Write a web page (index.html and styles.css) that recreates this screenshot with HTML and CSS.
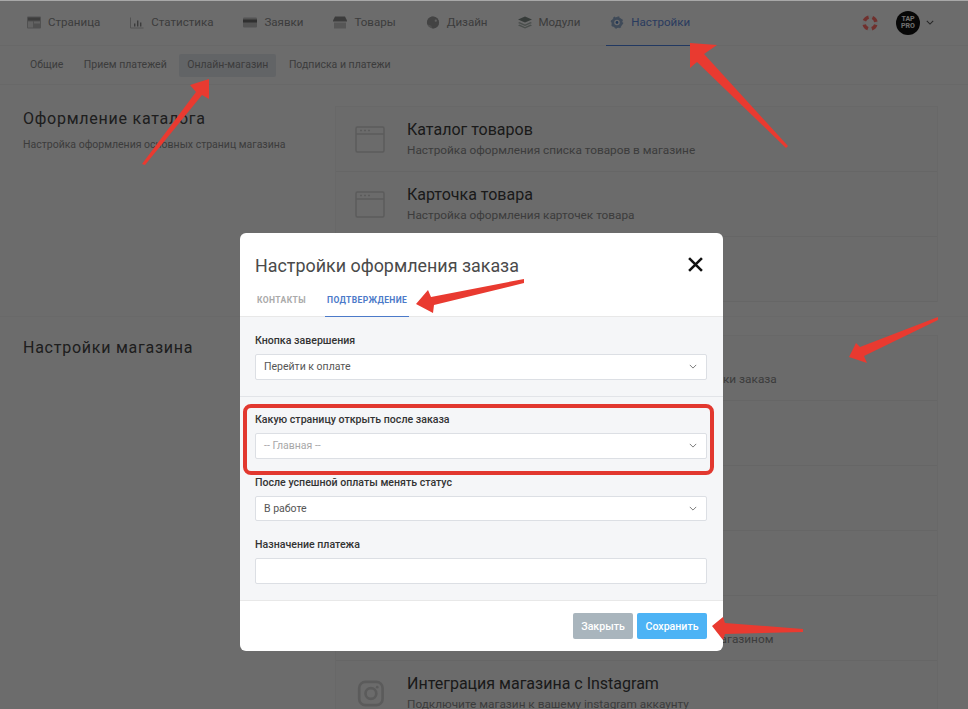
FILE: index.html
```html
<!DOCTYPE html>
<html lang="ru">
<head>
    <meta charset="UTF-8">
    <title>Настройки</title>
    <link rel="stylesheet" href="styles.css">
</head>
<body>
    <div class="page">
        <nav class="topnav">
            <a class="nav-item">
                <svg class="nav-icon" viewBox="0 0 14 12"><rect width="14" height="12" rx="1" fill="#b9b9b9"/><rect x="1" y="1" width="12" height="3" fill="#8c8c8c"/><rect x="1" y="5" width="5" height="6" fill="#e2e2e2"/><rect x="7" y="5" width="6" height="2" fill="#e2e2e2"/></svg>
                Страница
            </a>
            <a class="nav-item">
                <svg class="nav-icon" viewBox="0 0 14 12"><path d="M.5 1v10.5h13" fill="none" stroke="#bbb"/><path d="M4 7h1.4v3H4zM7 4h1.4v6H7zM10 6h1.4v4H10z" fill="#888"/></svg>
                Статистика
            </a>
            <a class="nav-item">
                <svg class="nav-icon" viewBox="0 0 14 12"><rect y="1" width="14" height="10" rx="1" fill="#bdbdbd"/><rect y="3" width="14" height="3" fill="#6f6f6f"/></svg>
                Заявки
            </a>
            <a class="nav-item">
                <svg class="nav-icon" viewBox="0 0 14 12"><path d="M2 0h10l2 4v1H0V4z" fill="#8a8a8a"/><path d="M1 6h12v6H1z" fill="#c4c4c4"/></svg>
                Товары
            </a>
            <a class="nav-item">
                <svg class="nav-icon" viewBox="0 0 14 14"><circle cx="7" cy="7" r="6.5" fill="#b5b5b5"/><path d="M7 .5a6.500 6.500 0 0 1 0 13c-1.500 0-1-2-2-3s-4 0-4.500-3C.5 3 3.500.5 7 .5z" fill="#999"/><circle cx="10" cy="5" r="1.200" fill="#ddd"/></svg>
                Дизайн
            </a>
            <a class="nav-item">
                <svg class="nav-icon" viewBox="0 0 14 12"><path d="M7 0l7 3-7 3-7-3z" fill="#7d8a84"/><path d="M1.500 5.500L7 8l5.500-2.500L14 6.500 7 9.500 0 6.500zM1.500 8L7 10.500 12.500 8 14 9l-7 3-7-3z" fill="#a9b3ae"/></svg>
                Модули
            </a>
            <a class="nav-item nav-active">
                <svg class="nav-icon" viewBox="0 0 14 14"><circle cx="7" cy="7" r="4.500" fill="none" stroke="#8fa9c9" stroke-width="3"/><circle cx="7" cy="7" r="6" fill="none" stroke="#8fa9c9" stroke-width="1.500" stroke-dasharray="2 2.700"/><circle cx="7" cy="7" r="1.500" fill="#4d7fc4"/></svg>
                Настройки
            </a>
            <div class="nav-right">
                <svg class="help-icon" viewBox="0 0 16 16"><circle cx="8" cy="8" r="6" fill="none" stroke="#f0f0f0" stroke-width="3.500"/><circle cx="8" cy="8" r="6" fill="none" stroke="#ff6f68" stroke-width="3.500" stroke-dasharray="5.400 4"  stroke-dashoffset="-1.900"/></svg>
                <div class="avatar">TAP<br>PRO</div>
                <svg class="avatar-caret" viewBox="0 0 10 6"><path d="M1 1l4 4 4-4" fill="none" stroke="#555" stroke-width="1.300"/></svg>
            </div>
        </nav>

        <nav class="subnav">
            <a class="sub-item">Общие</a>
            <a class="sub-item">Прием платежей</a>
            <a class="sub-item sub-active">Онлайн-магазин</a>
            <a class="sub-item">Подписка и платежи</a>
        </nav>

        <section class="section section-first">
            <div class="section-info">
                <h2>Оформление каталога</h2>
                <p>Настройка оформления основных страниц магазина</p>
            </div>
            <div class="list">
                <div class="row">
                    <svg class="row-icon" viewBox="0 0 30 27"><rect x="1" y="1" width="28" height="25" rx="1.500"/><path d="M1 8h28M5 4.500h2M9 4.500h2M13 4.500h2"/></svg>
                    <div>
                        <h3>Каталог товаров</h3>
                        <p>Настройка оформления списка товаров в магазине</p>
                    </div>
                </div>
                <div class="row">
                    <svg class="row-icon" viewBox="0 0 30 27"><rect x="1" y="1" width="28" height="25" rx="1.500"/><path d="M1 8h28M5 4.500h2M9 4.500h2M13 4.500h2"/></svg>
                    <div>
                        <h3>Карточка товара</h3>
                        <p>Настройка оформления карточек товара</p>
                    </div>
                </div>
                <div class="row">
                    <div class="row-text">
                        <h3>&nbsp;</h3>
                        <p>Настройка оформления корзины покупателя в магазине</p>
                    </div>
                </div>
            </div>
        </section>

        <section class="section">
            <div class="section-info">
                <h2>Настройки магазина</h2>
            </div>
            <div class="list">
                <div class="row">
                    <div class="row-text">
                        <h3>&nbsp;</h3>
                        <p>Настройка страницы, оформления корзины для перевозки заказа</p>
                    </div>
                </div>
                <div class="row"></div>
                <div class="row"></div>
                <div class="row"></div>
                <div class="row">
                    <div class="row-text">
                        <h3>&nbsp;</h3>
                        <p>Настройка связи сторонних сервисов и приложений с магазином</p>
                    </div>
                </div>
                <div class="row">
                    <svg class="row-icon" viewBox="0 0 30 30"><rect class="thick" x="3" y="2" width="26" height="26" rx="7"/><circle class="thick" cx="16" cy="15" r="6"/><circle class="dot" cx="23" cy="8" r="1.500"/></svg>
                    <div>
                        <h3>Интеграция магазина с Instagram</h3>
                        <p>Подключите магазин к вашему instagram аккаунту</p>
                    </div>
                </div>
            </div>
        </section>
    </div>

    <div class="overlay">
        <div class="modal">
            <div class="modal-head">
                <h1>Настройки оформления заказа</h1>
                <svg class="modal-close" viewBox="0 0 14 14"><path d="M1 1l12 12M13 1L1 13" fill="none" stroke="#111" stroke-width="2.400"/></svg>
            </div>
            <div class="tabs">
                <a class="tab">Контакты</a>
                <a class="tab tab-active">Подтверждение</a>
            </div>
            <div class="modal-body">
                <div class="field field-split">
                    <label>Кнопка завершения</label>
                    <div class="select">Перейти к оплате
                        <svg class="caret" viewBox="0 0 10 6"><path d="M1 1l4 4 4-4" fill="none" stroke="#777" stroke-width="1.200"/></svg>
                    </div>
                </div>
                <div class="field">
                    <label>Какую страницу открыть после заказа</label>
                    <div class="select select-muted">-- Главная --
                        <svg class="caret" viewBox="0 0 10 6"><path d="M1 1l4 4 4-4" fill="none" stroke="#777" stroke-width="1.200"/></svg>
                    </div>
                </div>
                <div class="field">
                    <label>После успешной оплаты менять статус</label>
                    <div class="select">В работе
                        <svg class="caret" viewBox="0 0 10 6"><path d="M1 1l4 4 4-4" fill="none" stroke="#777" stroke-width="1.200"/></svg>
                    </div>
                </div>
                <div class="field">
                    <label>Назначение платежа</label>
                    <input class="input" type="text">
                </div>
            </div>
            <div class="modal-foot">
                <button class="btn btn-close" type="button">Закрыть</button>
                <button class="btn btn-save" type="button">Сохранить</button>
            </div>
        </div>
    </div>

    <!-- annotations drawn over the screenshot -->
    <div class="mark-frame"></div>
    <svg class="marks" viewBox="0 0 968 709">
        <polygon points="142,164 196,92 190,85 209,79 209,99 202,95 145,165"/>
        <polygon points="690,43 717,45 704,54 788,146 786,148 697,62 690,68"/>
        <polygon points="416,304 428,290 431,297 524,279 524,283 434,305 433,313"/>
        <polygon points="849,357 856,343 860,347 938,317 938,320 864,356 867,363"/>
        <polygon points="712,626 723,617 725,623 803,629 803,632 725,634 723,640"/>
    </svg>
</body>
</html>
```

FILE: styles.css
```css
* {
    box-sizing: border-box;
}
html, body {
    height: 709px;
    overflow: hidden;
}
body {
    margin: 0;
    font-family: Roboto, "Liberation Sans", sans-serif;
    background: #f5f5f6;
    color: #333;
}
h1, h2, h3, p {
    margin: 0;
    font-weight: 400;
}

/* top menu */
.topnav {
    display: flex;
    height: 46px;
    padding: 0 34px 0 23px;
    gap: 22px;
    border-bottom: 1px solid #ececec;
}
.nav-item {
    display: flex;
    align-items: center;
    gap: 7px;
    padding: 0 4px 1px;
    margin-bottom: -1px;
    font-size: 11.55px;
    color: #8a8a8a;
    border-bottom: 1px solid transparent;
}
.nav-icon {
    width: 14px;
    height: 13px;
}
.nav-active {
    color: #5f88d8;
    border-bottom-color: #4d7fdc;
}
.nav-right {
    display: flex;
    align-items: center;
    margin-left: auto;
}
.help-icon {
    width: 16px;
    height: 16px;
    margin-right: 18px;
}
.avatar {
    width: 24px;
    height: 24px;
    border-radius: 50%;
    background: #111;
    color: #fff;
    font-size: 7px;
    font-weight: 700;
    line-height: 7px;
    text-align: center;
    padding-top: 5px;
}
.avatar-caret {
    width: 8px;
    height: 5px;
    margin-left: 6px;
}

.subnav {
    display: flex;
    align-items: center;
    height: 39px;
    padding: 0 22px;
    gap: 4.5px;
    border-bottom: 1px solid #ececec;
}
.sub-item {
    padding: 5px 8px 6px;
    font-size: 10.5px;
    line-height: 12px;
    color: #8a8a8a;
    border-radius: 2px;
}
.sub-active {
    background: #dfe3e8;
}

/* settings sections */
.section {
    display: flex;
    padding: 0 30px 0 23px;
}
.section-first {
    padding-top: 21px;
    padding-bottom: 14px;
    border-bottom: 1px solid #eeeeee;
    margin-bottom: 18px;
}
.section-info {
    width: 312px;
    padding-top: 3px;
}
.section-info h2 {
    font-size: 16px;
    line-height: 20px;
    letter-spacing: 0.75px;
    color: #444;
}
.section-info p {
    margin-top: 9px;
    font-size: 10.5px;
    line-height: 14px;
    color: #8a8a8a;
}
.list {
    flex: 1;
    border: 1px solid #ececec;
    border-bottom: 0;
    background: #f3f3f3;
}
.row {
    display: flex;
    align-items: center;
    gap: 22px;
    height: 65px;
    padding: 0 19px;
    border-bottom: 1px solid #e9e9e9;
}
.row h3 {
    font-size: 16px;
    line-height: 20px;
    color: #3c3c3c;
}
.row p {
    padding-top: 1px;
    font-size: 11.8px;
    line-height: 18px;
    color: #8a8a8a;
}
.row-text {
    padding-left: 52px;
}
.row-icon {
    flex: none;
    width: 30px;
    height: 27px;
    fill: none;
    stroke: #cfcfcf;
    stroke-width: 1.500;
}
.row-icon .thick {
    stroke-width: 3;
}
.row-icon .dot {
    fill: #cfcfcf;
    stroke: none;
}

/* dialog */
.overlay {
    position: absolute;
    top: 0;
    left: 0;
    width: 968px;
    height: 709px;
    background: rgba(0, 0, 0, 0.56);
    border-top: 1px solid #a8a8a8;
}
.modal {
    width: 483px;
    height: 418px;
    margin: 232px 0 0 240px;
    background: #fff;
    border-radius: 6px;
    overflow: hidden;
}
.modal-head {
    display: flex;
    align-items: center;
    justify-content: space-between;
    height: 56px;
    padding: 8px 20px 0 15px;
}
.modal-head h1 {
    font-size: 17.9px;
    color: #4a4a4a;
}
.modal-close {
    width: 15px;
    height: 15px;
    margin-top: -2px;
}
.tabs {
    display: flex;
    height: 28px;
    gap: 17px;
    padding: 0 15px;
    border-bottom: 1px solid #e8e8e8;
}
.tab {
    padding: 6px 2px 0;
    height: 28px;
    font-size: 8.5px;
    font-weight: 700;
    line-height: 11px;
    letter-spacing: 0.4px;
    text-transform: uppercase;
    color: #aaa;
}
.tab-active {
    color: #4c7ac9;
    border-bottom: 1px solid #4c7ac9;
}
.modal-body {
    height: 284px;
    padding: 17px 16px 0 15px;
    background: #f5f6f8;
    border-bottom: 1px solid #e8e8e8;
}
.field {
    margin-bottom: 17px;
}
.field-split {
    padding: 0 16px 16px 15px;
    margin: 0 -16px 16.5px -15px;
    border-bottom: 1px solid #e2e4e8;
}
.field label {
    display: block;
    margin-bottom: 6px;
    font-size: 10.6px;
    font-weight: 500;
    line-height: 14px;
    color: #333;
}
.select, .input {
    display: flex;
    align-items: center;
    justify-content: space-between;
    width: 100%;
    height: 25.5px;
    padding: 0 9px 0 8px;
    background: #fff;
    border: 1px solid #dcdfe4;
    border-radius: 2px;
    font-size: 10.5px;
    color: #555;
}
.select-muted {
    color: #a8a8a8;
}
.caret {
    width: 8px;
    height: 5px;
}
.modal-foot {
    display: flex;
    justify-content: flex-end;
    gap: 4px;
    padding: 12px 16px;
}
.btn {
    height: 26px;
    padding: 0;
    border: 0;
    border-radius: 2px;
    font-family: inherit;
    font-size: 10.6px;
    font-weight: 500;
    color: #fff;
}
.btn-close {
    width: 60px;
    background: #a9b5bd;
}
.btn-save {
    width: 70px;
    background: #4db3f5;
}

/* annotations */
.mark-frame {
    position: absolute;
    left: 243px;
    top: 404px;
    width: 471px;
    height: 71px;
    border: 4px solid #e2382f;
    border-radius: 8px;
}
.marks {
    position: absolute;
    top: 0;
    left: 0;
    width: 968px;
    height: 709px;
    fill: #e93a30;
}
```
